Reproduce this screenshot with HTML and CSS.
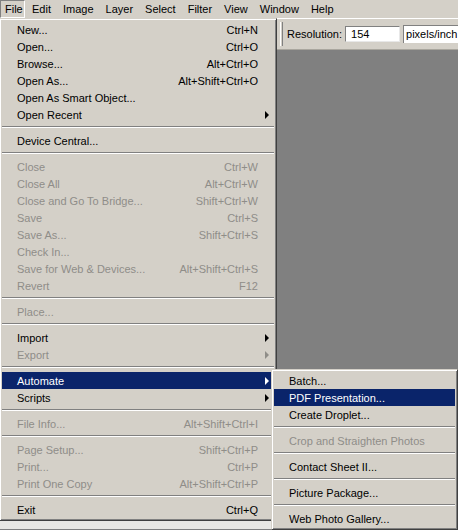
FILE: index.html
```html
<!DOCTYPE html>
<html>
<head>
<meta charset="utf-8">
<link rel="stylesheet" href="styles.css">
</head>
<body>
<div class="menubar">
  <span class="mb-item active">File</span>
  <span class="mb-item">Edit</span>
  <span class="mb-item">Image</span>
  <span class="mb-item">Layer</span>
  <span class="mb-item">Select</span>
  <span class="mb-item">Filter</span>
  <span class="mb-item">View</span>
  <span class="mb-item">Window</span>
  <span class="mb-item">Help</span>
</div>
<div class="options">
  <div class="grip"></div>
  <span class="opt-label">Resolution:</span>
  <div class="field">154</div>
  <div class="select">pixels/inch</div>
</div>
<div class="workspace">
  <div class="tools"></div>
  <div class="canvas"></div>
</div>

<div class="menu file-menu">
  <div class="row"><span class="label">New...</span><span class="key">Ctrl+N</span><span class="arr"></span></div>
  <div class="row"><span class="label">Open...</span><span class="key">Ctrl+O</span><span class="arr"></span></div>
  <div class="row"><span class="label">Browse...</span><span class="key">Alt+Ctrl+O</span><span class="arr"></span></div>
  <div class="row"><span class="label">Open As...</span><span class="key">Alt+Shift+Ctrl+O</span><span class="arr"></span></div>
  <div class="row"><span class="label">Open As Smart Object...</span><span class="key"></span><span class="arr"></span></div>
  <div class="row"><span class="label">Open Recent</span><span class="key"></span><span class="arr"><i class="tri"></i></span></div>
  <div class="sep"></div>
  <div class="row"><span class="label">Device Central...</span><span class="key"></span><span class="arr"></span></div>
  <div class="sep"></div>
  <div class="row off"><span class="label">Close</span><span class="key">Ctrl+W</span><span class="arr"></span></div>
  <div class="row off"><span class="label">Close All</span><span class="key">Alt+Ctrl+W</span><span class="arr"></span></div>
  <div class="row off"><span class="label">Close and Go To Bridge...</span><span class="key">Shift+Ctrl+W</span><span class="arr"></span></div>
  <div class="row off"><span class="label">Save</span><span class="key">Ctrl+S</span><span class="arr"></span></div>
  <div class="row off"><span class="label">Save As...</span><span class="key">Shift+Ctrl+S</span><span class="arr"></span></div>
  <div class="row off"><span class="label">Check In...</span><span class="key"></span><span class="arr"></span></div>
  <div class="row off"><span class="label">Save for Web &amp; Devices...</span><span class="key">Alt+Shift+Ctrl+S</span><span class="arr"></span></div>
  <div class="row off"><span class="label">Revert</span><span class="key">F12</span><span class="arr"></span></div>
  <div class="sep"></div>
  <div class="row off"><span class="label">Place...</span><span class="key"></span><span class="arr"></span></div>
  <div class="sep"></div>
  <div class="row"><span class="label">Import</span><span class="key"></span><span class="arr"><i class="tri"></i></span></div>
  <div class="row off"><span class="label">Export</span><span class="key"></span><span class="arr"><i class="tri"></i></span></div>
  <div class="sep"></div>
  <div class="row hi"><span class="label">Automate</span><span class="key"></span><span class="arr"><i class="tri"></i></span></div>
  <div class="row"><span class="label">Scripts</span><span class="key"></span><span class="arr"><i class="tri"></i></span></div>
  <div class="sep"></div>
  <div class="row off"><span class="label">File Info...</span><span class="key">Alt+Shift+Ctrl+I</span><span class="arr"></span></div>
  <div class="sep"></div>
  <div class="row off"><span class="label">Page Setup...</span><span class="key">Shift+Ctrl+P</span><span class="arr"></span></div>
  <div class="row off"><span class="label">Print...</span><span class="key">Ctrl+P</span><span class="arr"></span></div>
  <div class="row off"><span class="label">Print One Copy</span><span class="key">Alt+Shift+Ctrl+P</span><span class="arr"></span></div>
  <div class="sep"></div>
  <div class="row"><span class="label">Exit</span><span class="key">Ctrl+Q</span><span class="arr"></span></div>
</div>

<div class="menu sub-menu">
  <div class="row"><span class="label">Batch...</span></div>
  <div class="row hi"><span class="label">PDF Presentation...</span></div>
  <div class="row"><span class="label">Create Droplet...</span></div>
  <div class="sep"></div>
  <div class="row off"><span class="label">Crop and Straighten Photos</span></div>
  <div class="sep"></div>
  <div class="row"><span class="label">Contact Sheet II...</span></div>
  <div class="sep"></div>
  <div class="row"><span class="label">Picture Package...</span></div>
  <div class="sep"></div>
  <div class="row"><span class="label">Web Photo Gallery...</span></div>
</div>
</body>
</html>
```

FILE: styles.css
```css
html, body {
  margin: 0;
  padding: 0;
}
body {
  width: 458px;
  height: 530px;
  overflow: hidden;
  position: relative;
  background: #808080;
  font-family: "Liberation Sans", Arial, sans-serif;
  font-size: 11px;
  color: #000;
}

/* menu bar */
.menubar {
  height: 18px;
  background: #d4d0c8;
  display: flex;
  align-items: stretch;
}
.mb-item {
  padding: 0 6px;
  line-height: 18px;
  box-sizing: border-box;
}
.mb-item.active {
  padding: 0 4px 0 4px;
  width: 25px;
  border: 1px solid;
  border-color: #808080 #ffffff #ffffff #808080;
  line-height: 16px;
  margin-right: 1px;
}

/* options bar */
.options {
  height: 32px;
  background: #d4d0c8;
  border-top: 1px solid #ffffff;
  border-bottom: 1px solid #a9a69e;
  display: flex;
  align-items: center;
  padding-left: 280px;
  box-sizing: border-box;
}
.grip {
  width: 1px;
  height: 24px;
  border-left: 1px solid #ffffff;
  border-right: 1px solid #808080;
  margin-right: 4px;
}
.opt-label {
  margin-right: 3px;
}
.field {
  width: 55px;
  height: 16px;
  box-sizing: border-box;
  background: #fff;
  border: 1px solid;
  border-color: #808080 #e8e8e8 #e8e8e8 #808080;
  padding-left: 5px;
  line-height: 14px;
}
.select {
  margin-left: 3px;
  flex: 1;
  height: 18px;
  box-sizing: border-box;
  background: #fff;
  border-left: 1px solid #808080;
  border-top: 1px solid #808080;
  padding-left: 2px;
  line-height: 17px;
}

/* workspace */
.workspace {
  height: 479px;
  display: flex;
}
.tools {
  width: 277px;
  background: #e9e8e4;
}
.canvas {
  flex: 1;
  background: #808080;
}

/* menus */
.menu {
  position: absolute;
  background: #d4d0c8;
  border: 1px solid;
  border-color: #d4d0c8 #404040 #404040 #d4d0c8;
  box-shadow: inset 1px 1px #ffffff, inset -1px -1px #808080;
  padding: 2px;
}
.file-menu {
  left: -1px;
  top: 18px;
  width: 272px;
}
.sub-menu {
  left: 271px;
  top: 369px;
  width: 181px;
}
.row {
  height: 17px;
  display: flex;
  align-items: center;
  padding-left: 15px;
  white-space: nowrap;
}
.row .label {
  flex: 1;
}
.row .key {
  text-align: right;
}
.row .arr {
  width: 16px;
  height: 17px;
  position: relative;
}
.tri {
  position: absolute;
  left: 7px;
  top: 5px;
  width: 0;
  height: 0;
  border-top: 4px solid transparent;
  border-bottom: 4px solid transparent;
  border-left: 4px solid #000;
}
.row.off {
  color: #8f8d88;
}
.row.off .tri {
  border-left-color: #8f8d88;
}
.row.hi {
  background: #0a246a;
  color: #ffffff;
}
.row.hi .tri {
  border-left-color: #ffffff;
}
.sep {
  height: 0;
  border-top: 1px solid #808080;
  border-bottom: 1px solid #ffffff;
  margin: 3px 0 4px;
}
```
